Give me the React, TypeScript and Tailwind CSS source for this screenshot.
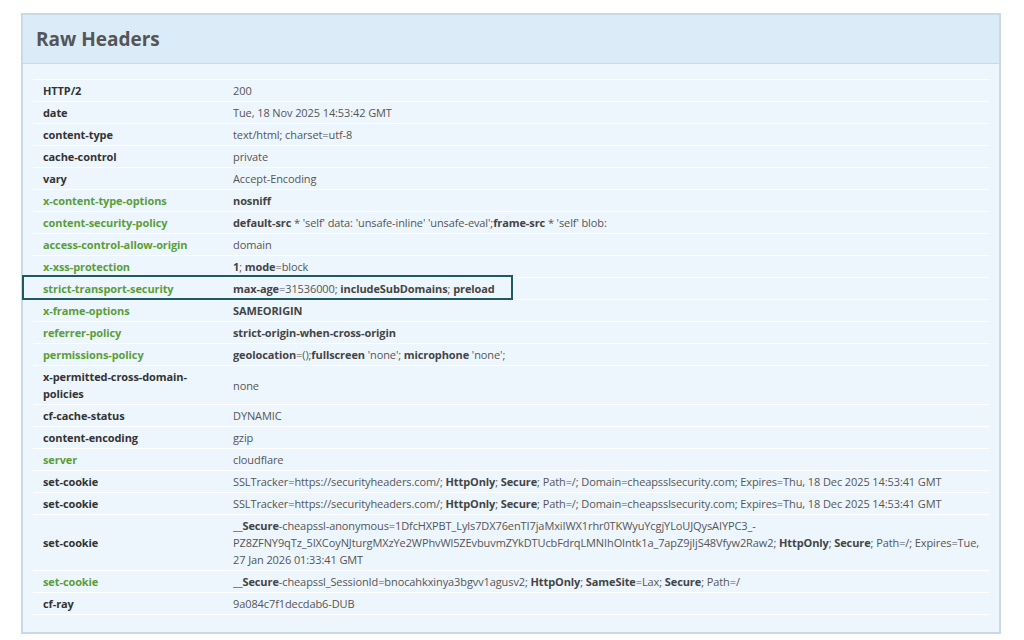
const G = "text-[#5a9e3a]";

type Row = { k: string; green?: boolean; boxed?: boolean; v: React.ReactNode };

const B = ({ children }: { children: React.ReactNode }) => (
  <b className="font-bold text-[#444]">{children}</b>
);

const rows: Row[] = [
  { k: "HTTP/2", v: "200" },
  { k: "date", v: "Tue, 18 Nov 2025 14:53:42 GMT" },
  { k: "content-type", v: "text/html; charset=utf-8" },
  { k: "cache-control", v: "private" },
  { k: "vary", v: "Accept-Encoding" },
  { k: "x-content-type-options", green: true, v: <B>nosniff</B> },
  {
    k: "content-security-policy",
    green: true,
    v: (
      <>
        <B>default-src</B> * 'self' data: 'unsafe-inline' 'unsafe-eval';<B>frame-src</B> * 'self' blob:
      </>
    ),
  },
  { k: "access-control-allow-origin", green: true, v: "domain" },
  { k: "x-xss-protection", green: true, v: <><B>1</B>; <B>mode</B>=block</> },
  {
    k: "strict-transport-security",
    green: true,
    boxed: true,
    v: <><B>max-age</B>=31536000; <B>includeSubDomains</B>; <B>preload</B></>,
  },
  { k: "x-frame-options", green: true, v: <B>SAMEORIGIN</B> },
  { k: "referrer-policy", green: true, v: <B>strict-origin-when-cross-origin</B> },
  {
    k: "permissions-policy",
    green: true,
    v: <><B>geolocation</B>=();<B>fullscreen</B> 'none'; <B>microphone</B> 'none';</>,
  },
  { k: "x-permitted-cross-domain-policies", v: "none" },
  { k: "cf-cache-status", v: "DYNAMIC" },
  { k: "content-encoding", v: "gzip" },
  { k: "server", green: true, v: "cloudflare" },
  {
    k: "set-cookie",
    v: <>SSLTracker=https://securityheaders.com/; <B>HttpOnly</B>; <B>Secure</B>; Path=/; Domain=cheapsslsecurity.com; Expires=Thu, 18 Dec 2025 14:53:41 GMT</>,
  },
  {
    k: "set-cookie",
    v: <>SSLTracker=https://securityheaders.com/; <B>HttpOnly</B>; <B>Secure</B>; Path=/; Domain=cheapsslsecurity.com; Expires=Thu, 18 Dec 2025 14:53:41 GMT</>,
  },
  {
    k: "set-cookie",
    v: (
      <>
        __<B>Secure</B>-cheapssl-anonymous=1DfcHXPBT_Lyls7DX76enTI7jaMxiIWX1rhr0TKWyuYcgjYLoUJQysAIYPC3_-
        <br />
        PZ8ZFNY9qTz_5IXCoyNJturgMXzYe2WPhvWl5ZEvbuvmZYkDTUcbFdrqLMNIhOIntk1a_7apZ9jIjS48Vfyw2Raw2; <B>HttpOnly</B>; <B>Secure</B>; Path=/; Expires=Tue,
        <br />
        27 Jan 2026 01:33:41 GMT
      </>
    ),
  },
  {
    k: "set-cookie",
    green: true,
    v: <>__<B>Secure</B>-cheapssl_SessionId=bnocahkxinya3bgvv1agusv2; <B>HttpOnly</B>; <B>SameSite</B>=Lax; <B>Secure</B>; Path=/</>,
  },
  { k: "cf-ray", v: "9a084c7f1decdab6-DUB" },
];

export default function App() {
  return (
    <div className="w-[1024px] h-[640px] bg-white pt-[13px] pl-[21px]" style={{ fontFamily: '"Open Sans", "Noto Sans", sans-serif' }}>
      <div className="w-[980px] border-2 border-[#c9d9e6] bg-[#eef6fd]">
        <div className="h-[49px] bg-[#dcebf8] border-b border-[#c9d9e6] flex items-center pl-[13px]">
          <h2 className="text-[19px] font-bold text-[#555]">Raw Headers</h2>
        </div>
        <div className="px-[10px] pt-[15px] pb-[17px]">
          {rows.map((r, i) => (
            <div
              key={i}
              className={`relative flex items-center border-b border-white text-[11px] leading-[17px] tracking-[-0.1px] ${i === 0 ? "border-t" : ""}`}
            >
              {r.boxed && (
                <div className="absolute -left-[11px] top-[-3px] w-[491px] h-[25px] border-2 border-[#1f5a63] pointer-events-none" />
              )}
              <div className={`w-[200px] shrink-0 px-[10px] py-[2px] font-bold ${r.green ? G : "text-[#333]"}`}>
                <span className="block w-[150px]">{r.k}</span>
              </div>
              <div className="flex-1 pr-[8px] py-[2px] text-[#555] whitespace-nowrap overflow-hidden">{r.v}</div>
            </div>
          ))}
        </div>
      </div>
    </div>
  );
}
